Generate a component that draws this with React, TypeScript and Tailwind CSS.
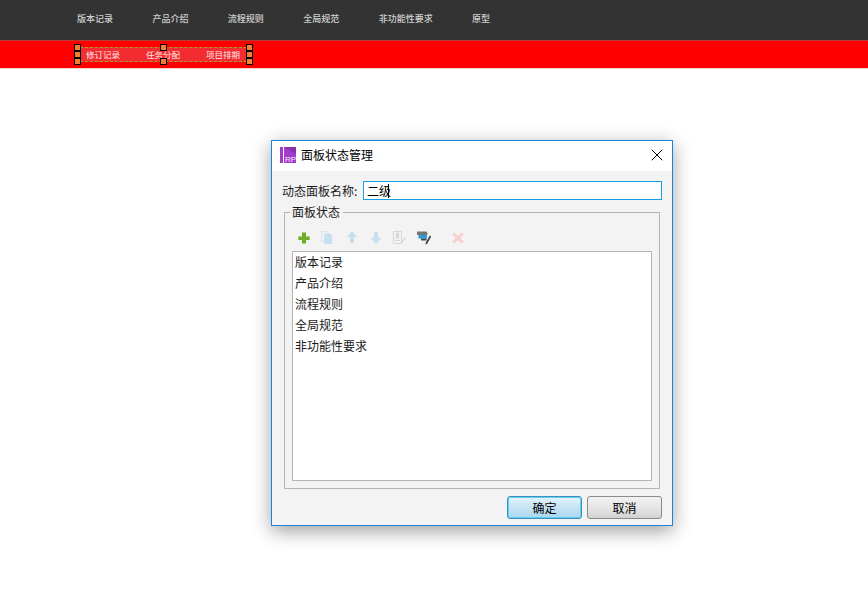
import { X } from 'lucide-react';

const topItems = ['版本记录', '产品介绍', '流程规则', '全局规范', '非功能性要求', '原型'];
const subItems = ['修订记录', '任务分配', '项目排期'];
const states = ['版本记录', '产品介绍', '流程规则', '全局规范', '非功能性要求'];

const handles = [
  'left-[-7px] top-[-4px]',
  'left-[-7px] top-[3px]',
  'left-[-7px] top-[10px]',
  'left-[79px] top-[-4px]',
  'left-[79px] top-[10px]',
  'left-[165px] top-[-4px]',
  'left-[165px] top-[3px]',
  'left-[165px] top-[10px]',
];

function PlusIcon() {
  return (
    <svg width="14" height="14" viewBox="0 0 14 14" className="block">
      <path d="M5 1.5h4V5.5h3.7V9H9v3.5H5V9H1.3V5.5H5z" fill="#71ad27" />
    </svg>
  );
}

function CopyIcon() {
  return (
    <svg width="14" height="14" viewBox="0 0 14 14" className="block">
      <path d="M.5 .5h6v10h-6z" fill="none" stroke="#d3e6f1" />
      <path d="M3 2.5h6l2 2V13H3z" fill="#c6e0ef" />
    </svg>
  );
}

function ArrowIcon({ down }: { down?: boolean }) {
  return (
    <svg width="14" height="14" viewBox="0 0 14 14" className="block">
      <path
        d={down ? 'M5 1h4v6h3.5L7 12.5 1.5 7H5z' : 'M7 .5L12.5 6H9v6H5V6H1.5z'}
        fill="#c6e0ef"
      />
    </svg>
  );
}

function RenameIcon() {
  return (
    <svg width="15" height="14" viewBox="0 0 15 14" className="block">
      <path d="M.5 .5h8v12h-8z" fill="#f3f3f3" stroke="#d6d6d6" />
      <path d="M3 1.5h3v6H3z" fill="#d8d8d8" />
      <path d="M2 9.5h5" stroke="#d6d6d6" />
      <path d="M8 12.5l4.5-6" stroke="#d8d8d8" strokeWidth="1.4" />
    </svg>
  );
}

function BatchIcon() {
  return (
    <svg width="15" height="14" viewBox="0 0 15 14" className="block">
      <path d="M0 .5h9.5l1 1.5v2H0z" fill="#767676" />
      <path d="M1.5 4h8.5v3.5H1.5z" fill="#2a9bd8" />
      <path d="M4 7.5h5.5V9.5H4z" fill="#3c4a58" />
      <path d="M9 13l4.5-8" stroke="#39424c" strokeWidth="1.6" />
    </svg>
  );
}

function DeleteIcon() {
  return (
    <svg width="14" height="14" viewBox="0 0 14 14" className="block">
      <path d="M3 1.5l4 3.3 4-3.3L12.8 3.5 9.2 7l3.6 3.5L11 12.5 7 9.2l-4 3.3-1.8-2L4.8 7 1.2 3.5z" fill="#f7cfcf" />
    </svg>
  );
}

function RpLogo() {
  return (
    <svg width="16" height="16" viewBox="0 0 16 16" className="block">
      <rect x="0" y="0" width="3" height="16" fill="#a33bc9" />
      <rect x="4" y="0" width="12" height="16" fill="#a43ccb" />
      <path d="M4 0l12 7V0z" fill="#8a2fae" />
      <text x="5" y="14.5" fontSize="8" fill="#f6ecfb" fontFamily="Liberation Sans, sans-serif">
        RP
      </text>
    </svg>
  );
}

export default function App() {
  return (
    <div className="min-h-[611px] bg-white font-['Noto_Sans_CJK_SC','Noto_Sans',sans-serif] overflow-hidden">
      {/* Top nav */}
      <div className="h-10 bg-[#333333] pl-[77px] flex items-center gap-[39.4px] pb-[3px]">
        {topItems.map((item) => (
          <span key={item} className="text-[9px] leading-none font-medium text-[#d0d0d0]">
            {item}
          </span>
        ))}
      </div>

      {/* Second level nav */}
      <div className="h-[29px] bg-[#ff0000] border-t border-[#b53a3a] border-b border-b-[#ffd0d0] pl-[80px] pt-[6px]">
        <div className="relative w-[167px] h-[15px] bg-[#f22c30] border border-dashed border-[#a0a030] pl-[5px] flex items-center gap-[26px]">
          {subItems.map((item) => (
            <span key={item} className="text-[8.5px] leading-none text-[#ffe9e9]">
              {item}
            </span>
          ))}
          {handles.map((pos) => (
            <span key={pos} className={`absolute ${pos} w-[7px] h-[7px] bg-[#f08030] border border-black`} />
          ))}
        </div>
      </div>

      {/* Dialog */}
      <div className="ml-[271px] mt-[71px] w-[402px] h-[386px] border border-[#1b82d6] bg-[#f3f3f3] shadow-[0_5px_18px_rgba(0,0,0,0.38)] flex flex-col text-xs text-[#1a1a1a]">
        <div className="h-[30px] bg-white flex items-center pl-2 pr-[5px] pb-[2px] shrink-0">
          <RpLogo />
          <span className="ml-[5px] text-black leading-none">面板状态管理</span>
          <X size={20} strokeWidth={1.2} className="ml-auto text-black" />
        </div>

        <div className="flex items-center pl-[10px] pr-[10px] mt-[10px] h-[19px] shrink-0">
          <span className="w-[81px] leading-none">动态面板名称:</span>
          <div className="flex-1 h-[19px] bg-white border border-[#16a0e6] flex items-center pl-[3px]">
            <span className="text-black leading-none">二级</span>
            <span className="w-px h-[14px] bg-black -ml-[3px]" />
          </div>
        </div>

        <fieldset className="mx-3 mt-[4px] h-[285px] border border-[#b4b4b4] px-[7px] shrink-0 min-w-0">
          <legend className="-ml-[2px] pl-[2px] pr-[3px] leading-4 text-[#1a1a1a]">面板状态</legend>
          <div className="h-[31px] flex items-center pl-[5px] pt-[4px]">
            <PlusIcon />
            <span className="ml-[10px]"><CopyIcon /></span>
            <span className="ml-[10px]"><ArrowIcon /></span>
            <span className="ml-[10px]"><ArrowIcon down /></span>
            <span className="ml-[10px]"><RenameIcon /></span>
            <span className="ml-[9px]"><BatchIcon /></span>
            <span className="ml-[19px]"><DeleteIcon /></span>
          </div>
          <div className="h-[230px] bg-white border border-[#b4b4b4] pl-[2px]">
            {states.map((s) => (
              <div key={s} className="h-[21px] leading-[19px] text-[#1a1a1a]">
                {s}
              </div>
            ))}
          </div>
        </fieldset>

        <div className="flex justify-end gap-[5px] pr-[10px] mt-[7px]">
          <button className="w-[75px] h-[23px] rounded-[3px] border border-[#3f8fb8] bg-gradient-to-b from-[#e6f4fb] via-[#c6e4f5] to-[#a9d7ef] shadow-[inset_0_0_0_1px_#5fd0f5] text-xs text-black leading-none">
            确定
          </button>
          <button className="w-[75px] h-[23px] rounded-[3px] border border-[#8a8a8a] bg-gradient-to-b from-[#f2f2f2] via-[#e6e6e6] to-[#d2d2d2] text-xs text-black leading-none">
            取消
          </button>
        </div>
      </div>
    </div>
  );
}
